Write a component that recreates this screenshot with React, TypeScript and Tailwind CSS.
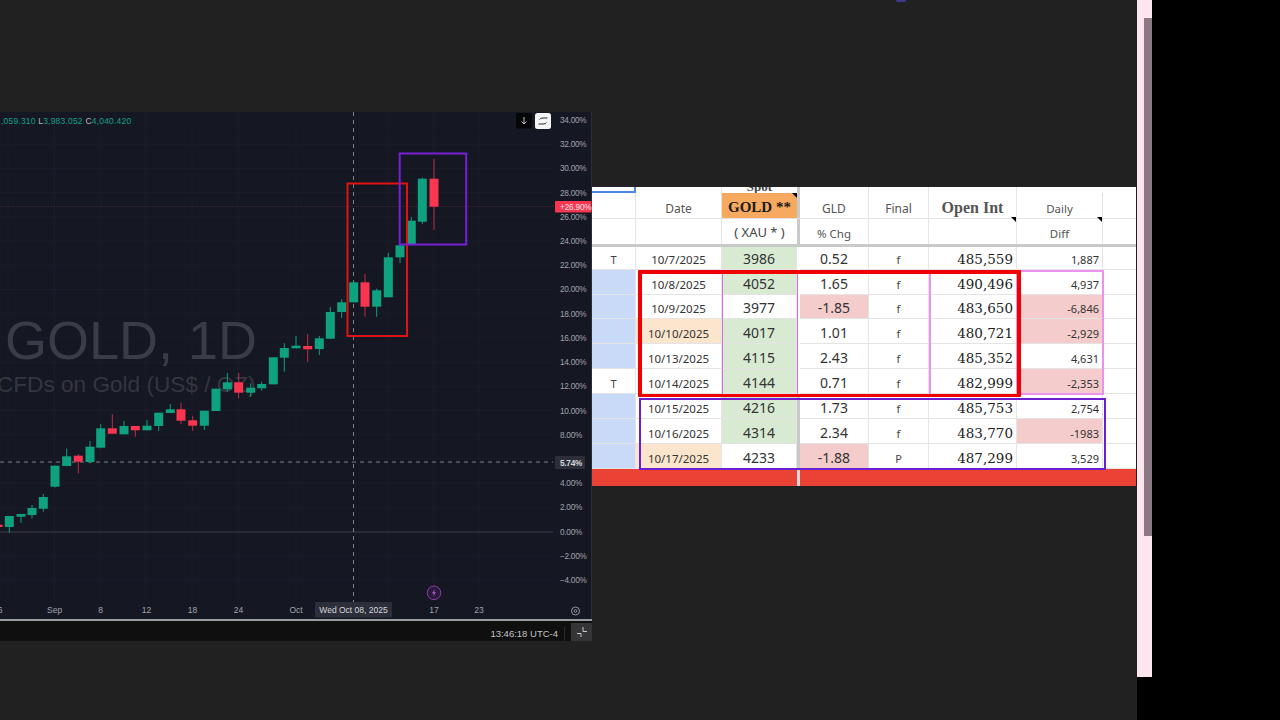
const candles: [number, "g" | "r", number, number, number, number][] = [
  // x, colour, body top, body bottom, wick top, wick bottom
  [-2, "r", 524.7, 527, 524, 528],
  [9.3, "g", 516, 527, 516, 532.7],
  [21, "g", 514, 516.7, 514, 523],
  [32, "g", 508, 515, 505, 518.3],
  [43.3, "g", 497, 508.7, 494, 511.7],
  [55, "g", 465.7, 486.7, 465.7, 487.5],
  [66.7, "g", 456.3, 466, 448.7, 466],
  [78.3, "r", 455.7, 461.7, 454, 473.3],
  [90, "g", 446.7, 462, 441, 463.3],
  [100.7, "g", 428.3, 447.7, 424.3, 448.3],
  [112.3, "r", 428.3, 433.7, 414.3, 433.7],
  [124, "g", 426, 434.3, 421, 434.3],
  [135.3, "r", 426, 430.3, 426, 436.7],
  [147, "g", 425.7, 430.3, 420, 430.3],
  [158.7, "g", 412.7, 426, 412.7, 431],
  [170.3, "g", 409.3, 413, 404, 413],
  [181, "r", 409.3, 420.7, 402.7, 424],
  [192.7, "r", 420.3, 425.7, 415.7, 431],
  [204.3, "g", 410.7, 425.7, 410.7, 430],
  [216, "g", 388.7, 411, 388.7, 411],
  [227.3, "g", 382.3, 389.3, 373, 391.7],
  [238.7, "r", 382.3, 392.7, 373, 398.3],
  [250.7, "g", 387.7, 392.7, 383.3, 396.7],
  [261.7, "g", 384, 388.3, 381.7, 390.7],
  [273.3, "g", 357.3, 384.3, 357.3, 384.3],
  [284.3, "g", 348, 357.7, 343.3, 371.7],
  [296, "g", 345.7, 348.3, 336, 348.3],
  [307.7, "r", 346, 349.3, 334, 362],
  [319.3, "g", 338.3, 349, 336, 355],
  [330.3, "g", 312, 338.7, 307, 339],
  [341.7, "g", 302.3, 312, 299, 318],
  [353.7, "g", 282.3, 302.3, 281.5, 302.3],
  [365, "r", 282.3, 306.7, 274, 316.7],
  [376.7, "g", 290.3, 306.7, 288.7, 316.7],
  [388.3, "g", 257.3, 297.3, 252.7, 297.3],
  [400, "g", 245.3, 257.3, 244, 263],
  [411.3, "g", 220.7, 245, 217, 245],
  [422.3, "g", 178.7, 221.7, 177.7, 224],
  [434, "r", 178.7, 206.7, 158.7, 230],
];

const scale = [
  "34.00%", "32.00%", "30.00%", "28.00%", "26.00%", "24.00%", "22.00%", "20.00%", "18.00%", "16.00%",
  "14.00%", "12.00%", "10.00%", "8.00%", "", "4.00%", "2.00%", "0.00%", "\u22122.00%", "\u22124.00%",
];

const timeLabels: [number, string][] = [
  [0, "6"], [54.6, "Sep"], [100.5, "8"], [146.5, "12"], [192.5, "18"], [238.5, "24"], [296, "Oct"], [434, "17"], [479, "23"],
];

const gridX = [8, 54.6, 100.7, 146, 192, 238, 296, 388, 434, 479];

function Chart() {
  return (
    <svg viewBox="0 112 592 507" className="block h-[507px] w-[592px] font-['Liberation_Sans',sans-serif]">
      <rect x="0" y="112" width="592" height="507" fill="#151723" />
      {scale.map((_, i) => (
        <line key={i} x1="0" x2="553" y1={120 + i * 24.21} y2={120 + i * 24.21} stroke="#1b1d29" strokeWidth="1" />
      ))}
      {gridX.map((x) => (
        <line key={x} x1={x} x2={x} y1="112" y2="600" stroke="#1b1d29" strokeWidth="1" />
      ))}

      <text x="5" y="359" fontSize="54" fill="#3a3c47">GOLD, 1D</text>
      <text x="-3" y="392" fontSize="22.6" fill="#34363f">CFDs on Gold (US$ / OZ)</text>

      <line x1="0" x2="555" y1="206.5" y2="206.5" stroke="#4e2636" strokeWidth="0.8" strokeDasharray="1 1" />
      <line x1="0" x2="553" y1="532" y2="532" stroke="#3b3d48" strokeWidth="1" />
      <line x1="0" x2="553" y1="462" y2="462" stroke="#7c7e86" strokeWidth="1" strokeDasharray="4 4" />
      <line x1="353.5" x2="353.5" y1="112" y2="602" stroke="#7c7e86" strokeWidth="1" strokeDasharray="4 4" />

      {candles.map(([x, c, top, bottom, wickTop, wickBottom]) => (
        <g key={x} fill={c === "g" ? "#0fa280" : "#f9354f"} stroke={c === "g" ? "#0fa280" : "#f9354f"}>
          <line x1={x} x2={x} y1={wickTop} y2={wickBottom} strokeWidth="1" opacity={c === "r" ? 0.75 : 1} />
          <rect x={x - 4.5} y={top} width="9" height={bottom - top} stroke="none" />
        </g>
      ))}

      <rect x="347.5" y="183.5" width="59.5" height="152.5" fill="none" stroke="#e01212" strokeWidth="2" />
      <rect x="399.7" y="153.5" width="66.5" height="91" fill="none" stroke="#7a1fd8" strokeWidth="2" />

      <text x="1" y="124" fontSize="8.5" letterSpacing="0.2" fill="#13a088">
        ,059.310 <tspan fill="#b5b7be">L</tspan>3,983.052 <tspan fill="#b5b7be">C</tspan>4,040.420
      </text>

      <rect x="516" y="113" width="16" height="15.5" rx="2" fill="#060608" />
      <path d="M524 117v7m-2.5-2.5L524 124l2.5-2.5" fill="none" stroke="#d5d5d8" strokeWidth="0.9" />
      <rect x="535" y="113" width="16" height="16" rx="2.5" fill="#f4f4f5" />
      <path d="M539.5 119.5a3.5 2 0 0 1 3.5-1.5h4.5M546.5 122.5a3.5 2 0 0 1-3.5 1.5h-4.5" fill="none" stroke="#2a2a30" strokeWidth="1" />

      <rect x="554" y="112" width="37" height="507" fill="#151723" />
      {scale.map((label, i) =>
        label ? (
          <text key={i} x="560" y={123 + i * 24.21} fontSize="8.2" letterSpacing="-0.25" fill="#a2a4ac">{label}</text>
        ) : null
      )}
      <line x1="591.5" x2="591.5" y1="112" y2="619" stroke="#2b2d36" strokeWidth="1" />
      <rect x="555" y="201" width="36.5" height="11.5" rx="1" fill="#f9354f" />
      <text x="560" y="209.7" fontSize="8.2" letterSpacing="-0.15" fill="#ffe9ec">+26.90%</text>
      <rect x="555" y="456" width="30" height="13" rx="1" fill="#2c2f3a" />
      <text x="560" y="466" fontSize="8.2" letterSpacing="-0.25" fontWeight="700" fill="#d6d7db">5.74%</text>

      {timeLabels.map(([x, label]) => (
        <text key={label} x={x} y="613.3" textAnchor="middle" fontSize="8.5" fill="#a2a4ac">{label}</text>
      ))}
      <rect x="315" y="602" width="77" height="15.5" rx="1" fill="#2c2f3a" />
      <text x="353.5" y="613.3" textAnchor="middle" fontSize="8.5" fill="#d6d7db">Wed Oct 08, 2025</text>

      <circle cx="434" cy="592.8" r="6.8" fill="#2a1a3c" stroke="#8a3fa8" strokeWidth="1" />
      <path d="M435 588.8l-3 4.6h2l-1 3.4 3-4.6h-2z" fill="#b65ad0" />

      <circle cx="575.5" cy="611" r="4" fill="none" stroke="#a2a4ac" strokeWidth="0.9" />
      <circle cx="575.5" cy="611" r="1.4" fill="none" stroke="#a2a4ac" strokeWidth="0.8" />
    </svg>
  );
}

type Row = {
  flag?: string;
  date: string;
  dateBg?: string;
  gold: string;
  goldBg?: string;
  gld: string;
  gldBg?: string;
  final: string;
  oi: string;
  diff: string;
  diffBg?: string;
  gap: string;
  h: string;
};

const green = "bg-[#d9ead3]";
const pink = "bg-[#f4cccc]";
const peach = "bg-[#fce5cd]";

const rows: Row[] = [
  { flag: "T", date: "10/7/2025", gold: "3986", goldBg: green, gld: "0.52", final: "f", oi: "485,559", diff: "1,887", gap: "bg-white", h: "h-[23px]" },
  { date: "10/8/2025", gold: "4052", goldBg: green, gld: "1.65", final: "f", oi: "490,496", diff: "4,937", gap: "bg-white", h: "h-[25px]" },
  { date: "10/9/2025", gold: "3977", gld: "-1.85", gldBg: pink, final: "f", oi: "483,650", diff: "-6,846", diffBg: pink, gap: "bg-white", h: "h-[24px]" },
  { date: "10/10/2025", dateBg: peach, gold: "4017", goldBg: green, gld: "1.01", final: "f", oi: "480,721", diff: "-2,929", diffBg: pink, gap: "bg-white", h: "h-[25px]" },
  { date: "10/13/2025", gold: "4115", goldBg: green, gld: "2.43", final: "f", oi: "485,352", diff: "4,631", gap: "bg-white", h: "h-[25px]" },
  { flag: "T", date: "10/14/2025", gold: "4144", goldBg: green, gld: "0.71", final: "f", oi: "482,999", diff: "-2,353", diffBg: pink, gap: "bg-white", h: "h-[25px]" },
  { date: "10/15/2025", gold: "4216", goldBg: green, gld: "1.73", final: "f", oi: "485,753", diff: "2,754", gap: "bg-[#c9c9c9]", h: "h-[25px]" },
  { date: "10/16/2025", gold: "4314", goldBg: green, gld: "2.34", final: "f", oi: "483,770", diff: "-1983", diffBg: pink, gap: "bg-[#c9c9c9]", h: "h-[25px]" },
  { date: "10/17/2025", dateBg: peach, gold: "4233", gld: "-1.88", gldBg: pink, final: "P", oi: "487,299", diff: "3,529", gap: "bg-[#c9c9c9]", h: "h-[25px]" },
];

const cols = "grid grid-cols-[44px_86px_75px_3px_69px_60px_88px_86px_33px]";
const cell = "flex items-end justify-center border-r border-b border-[#e4e4e4] pb-[1px] leading-[16px]";
const head = "flex items-end justify-center border-r border-[#e4e4e4] leading-[16px] text-[#555]";
const oiFont = "font-['DejaVu_Serif',serif]";

function Sheet() {
  return (
    <div className="relative w-[544px] bg-white font-['Noto_Sans',sans-serif] text-[#333]">
      {/* clipped top row */}
      <div className={`${cols} h-[6px] overflow-hidden`}>
        <div className="border-r-2 border-b-2 border-[#4a86e8]" />
        <div className="border-r border-[#e4e4e4]" />
        <div className="flex items-end justify-center overflow-hidden font-['Liberation_Serif',serif] text-[13px] leading-[10px] font-bold text-[#444]">
          <span className="mb-[1px]">Spot</span>
        </div>
        <div className="bg-[#c9c9c9]" />
        <div className="border-r border-[#e4e4e4]" />
        <div className="border-r border-[#e4e4e4]" />
        <div className="border-r border-[#e4e4e4]" />
        <div />
        <div />
      </div>

      <div className={`${cols} h-[26px] border-b border-[#e4e4e4]`}>
        <div className="border-r border-[#e4e4e4]" />
        <div className={`${head} pb-[1px] text-[12px]`}>Date</div>
        <div className="relative flex items-end justify-center bg-[#f6a95f] pb-[2px] font-['Liberation_Serif',serif] text-[15px] leading-[18px] font-bold text-[#1c1c1c]">
          GOLD **
          <span className="absolute top-0 right-0 border-t-[5px] border-l-[5px] border-t-black border-l-transparent" />
        </div>
        <div className="bg-[#c9c9c9]" />
        <div className={`${head} pb-[1px] text-[12px]`}>GLD</div>
        <div className={`${head} pb-[1px] text-[12px]`}>Final</div>
        <div className={`relative ${head} pb-[2px] font-['Liberation_Serif',serif] text-[16px] font-bold text-[#222]`}>
          Open Int
          <span className="absolute right-0 bottom-[-4px] border-t-[5px] border-l-[5px] border-t-black border-l-transparent" />
        </div>
        <div className={`relative ${head} pb-[1px] text-[11.5px] text-[#444]`}>
          Daily
          <span className="absolute right-0 bottom-[-4px] border-t-[5px] border-l-[5px] border-t-black border-l-transparent" />
        </div>
        <div />
      </div>

      <div className={`${cols} h-[28px] border-b-[3px] border-[#c9c9c9]`}>
        <div className="border-r border-[#e4e4e4]" />
        <div className="border-r border-[#e4e4e4]" />
        <div className="flex items-end justify-center pb-[4px] text-[13px] leading-[16px] text-[#444]">( XAU * )</div>
        <div className="bg-[#c9c9c9]" />
        <div className={`${head} pb-[2px] text-[11.5px]`}>% Chg</div>
        <div className="border-r border-[#e4e4e4]" />
        <div className="border-r border-[#e4e4e4]" />
        <div className={`${head} pb-[2px] text-[11.5px]`}>Diff</div>
        <div />
      </div>

      {rows.map((r) => (
        <div key={r.date} className={`${cols} ${r.h}`}>
          <div className={`${cell} text-[11px] text-[#444] ${r.flag ? "" : "bg-[#c9daf8]"}`}>{r.flag}</div>
          <div className={`${cell} text-[11.5px] ${r.dateBg ?? ""}`}>{r.date}</div>
          <div className={`${cell} pb-[2px] text-[14px] ${r.goldBg ?? ""}`}>{r.gold}</div>
          <div className={r.gap} />
          <div className={`${cell} pb-[2px] text-[14px] ${r.gldBg ?? ""}`}>{r.gld}</div>
          <div className={`${cell} text-[11px] text-[#444]`}>{r.final}</div>
          <div className={`${cell} justify-end pr-[3px] pb-[2px] ${oiFont} text-[13.5px] text-[#222]`}>{r.oi}</div>
          <div className={`${cell} justify-end pr-[3px] text-[11px] ${r.diffBg ?? ""}`}>{r.diff}</div>
          <div className="border-b border-[#e4e4e4]" />
        </div>
      ))}

      <div className={`${cols} h-[17px]`}>
        <div className="col-span-3 bg-[#ea4335]" />
        <div className="bg-[#d8d8d8]" />
        <div className="col-span-5 bg-[#ea4335]" />
      </div>

      {/* hand drawn boxes over the sheet */}
      <div className="absolute top-[83px] left-[130px] h-[125px] w-[76px] border-x border-[#d76ee0]" />
      <div className="absolute top-[84px] left-[337px] h-[124px] w-[89px] border-x-2 border-[#ea92ec]" />
      <div className="absolute top-[83px] left-[425px] h-[125px] w-[87px] border-2 border-[#ea92ec]" />
      <div className="absolute top-[83px] left-[46px] h-[127px] w-[383px] rounded-[1px] border-x-4 border-t-4 border-b-[3px] border-[#f00000]" />
      <div className="absolute top-[211px] left-[47px] h-[72px] w-[467px] border-2 border-[#6a1fd0]" />
    </div>
  );
}

export default function App() {
  return (
    <div className="relative flex h-[720px] w-[1280px] overflow-hidden bg-black font-['Liberation_Sans',sans-serif]">
      <div className="flex w-[1137px] bg-[#212121]">
        <div className="w-[592px] pt-[112px]">
          <Chart />
          <div className="flex h-[22px] items-center justify-end border-t-2 border-[#9a9a9f] bg-[#0f0f10]">
            <span className="mt-[6px] text-[9.5px] text-[#c4c4c8]">13:46:18 UTC-4</span>
            <span className="mx-[6px] mt-[6px] h-[14px] w-px bg-[#2b2b2e]" />
            <div className="flex h-[18px] w-[21px] items-center justify-center self-end bg-[#353537]">
              <svg viewBox="0 0 12 12" className="h-[12px] w-[12px]" fill="none" stroke="#c9c9cc" strokeWidth="1">
                <path d="M1 7.5h4V11M7 1v4.5h4" />
              </svg>
            </div>
          </div>
        </div>
        <div className="pt-[187px]">
          <Sheet />
        </div>
      </div>
      <div className="h-[677px] w-[15px] bg-[#fde6ef] pt-[18px] pl-[7px]">
        <div className="h-[518px] w-[8px] bg-[#8b7a84]" />
      </div>
      <div className="absolute top-0 left-[896px] h-[2px] w-[10px] rounded-b-full bg-[#3d3790]" />
    </div>
  );
}
